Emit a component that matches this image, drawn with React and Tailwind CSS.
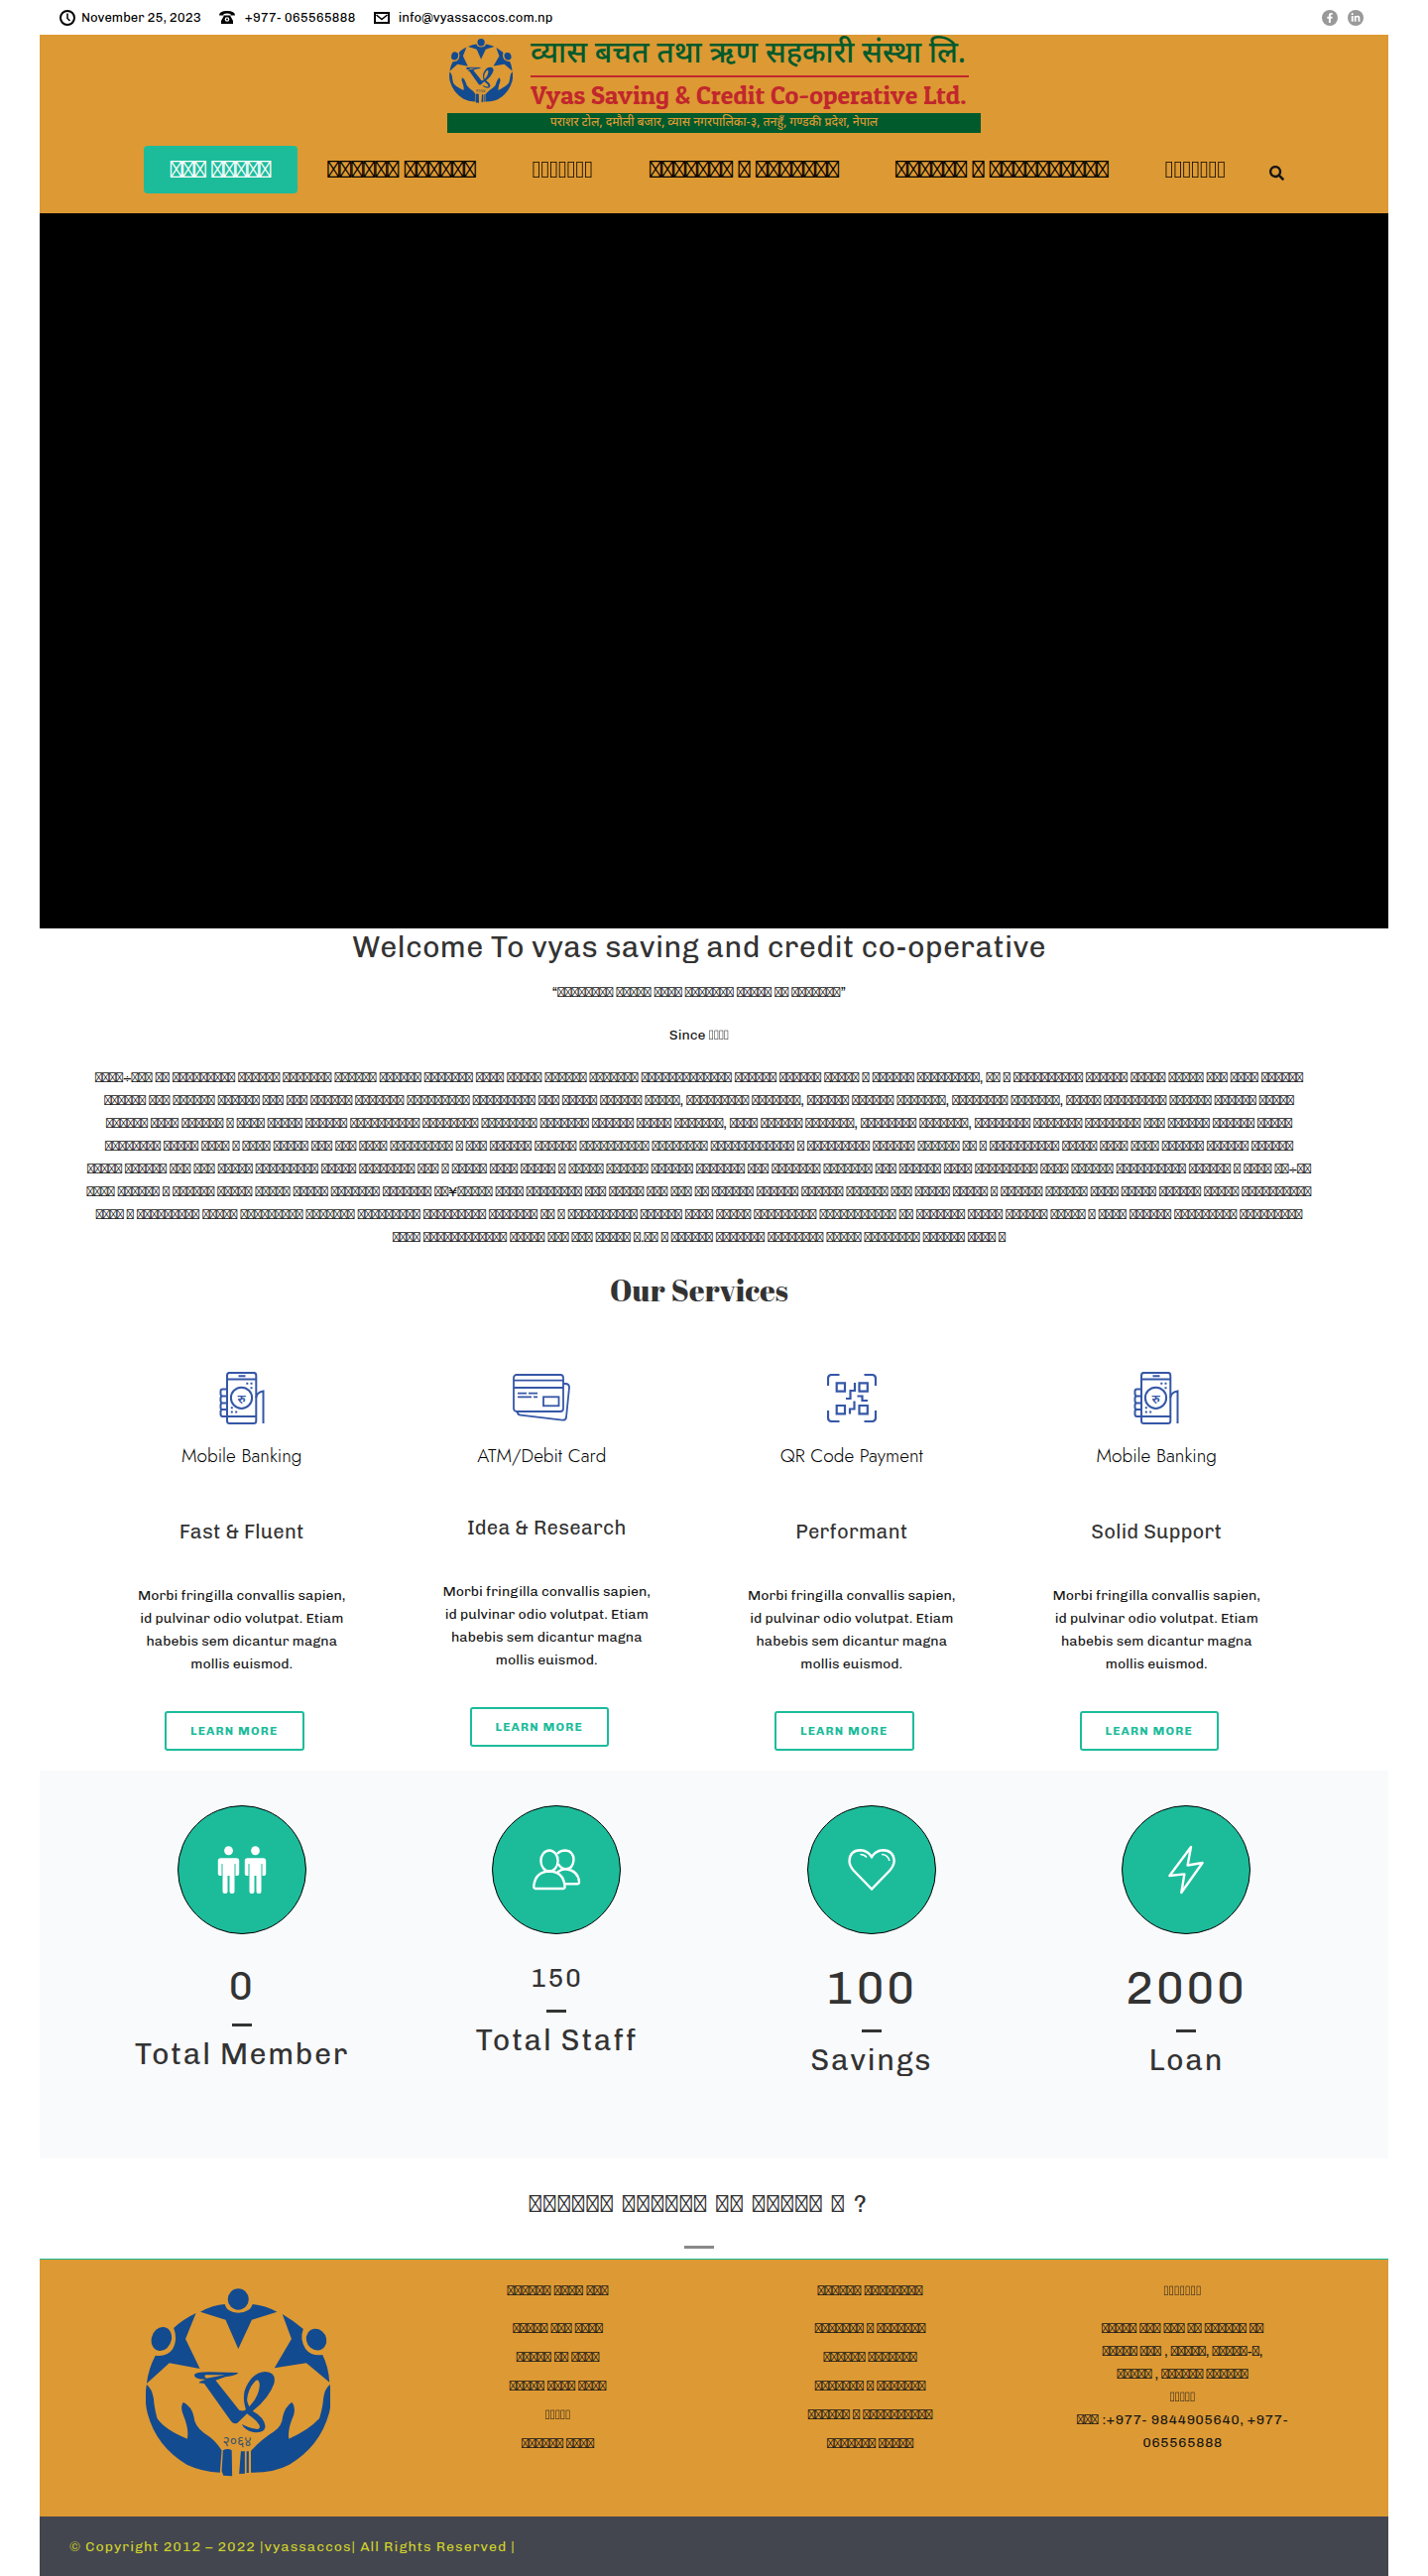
import React from "react";
import { FaSearch, FaFacebookF, FaLinkedinIn } from "react-icons/fa";

const GLYPH = "\uE002";
const boxes = (pattern) => pattern.replace(/#/g, GLYPH);

function Boxes({ children, thin }) {
  return <span className={thin ? "font-['WenQuanYi_Zen_Hei','Roboto',sans-serif]" : ""}>{boxes(children)}</span>;
}

const NAV = [
  { text: "### #####", active: true },
  { text: "###### ######" },
  { text: "#######", thin: true },
  { text: "####### # #######" },
  { text: "###### # ##########" },
  { text: "#######", thin: true },
];

const INTRO = [
  "####÷### ## ######### ###### ####### ###### ###### ####### #### ##### ###### ####### ############# ###### ###### ##### # ###### #########, ## # ########## ###### ##### ##### ### #### ######",
  "###### ### ###### ###### ### ### ###### ####### ######### ######### ### ##### ###### #####, ######### #######, ###### ###### #######, ######## #######, ##### ######### ###### ###### #####",
  "###### #### ###### # #### ##### ###### ########## ######## ######## ####### ###### ##### #######, #### ###### #######, ######## #######, ######## ####### ######## ### ###### ###### #####",
  "######## ##### #### # #### ##### ### ### #### ######### # ### ###### ###### ########## ######## ############ # ######### ###### ###### ## # ########## ##### #### #### ###### ###### ######",
  "##### ###### ### ### ##### ######### ##### ######## ### # ##### #### ##### # ##### ###### ###### ####### ### ####### ####### ### ###### #### ######### #### ###### ########## ###### # #### ##÷##",
  "#### ###### # ###### ##### ##### ##### ####### ####### ##¥##### #### ######## ### ##### ### ### ## ###### ###### ###### ###### ### ##### ##### # ###### ###### #### ##### ###### ##### ##########",
  "#### # ######### ##### ######### ####### ######### ######### ####### ## # ########## ###### #### ##### ######### ########### ## ####### ##### ###### ##### # #### ###### ######### #########",
  "#### ############ ##### ### ### ##### #.## # ###### ####### ######## ##### ######## ###### #### #",
];

function Emblem({ className }) {
  return (
    <svg viewBox="0 0 186 190" className={className} fill="#134b90" role="img" aria-label="Vyas emblem">
      <g transform="scale(0.44 0.3333) translate(-266 -142)">
        <ellipse cx="478" cy="175" rx="24" ry="32" />
        <path d="M391 213Q420 192 447 190Q452 215 478 216Q505 215 511 190Q540 194 567 213L509 237L478 325L449 237Z" />
        <ellipse cx="302" cy="295" rx="23" ry="36" transform="rotate(8 302 295)" />
        <path d="M381 217L357 295L390 385L320 368L268 430Q272 385 288 345Q315 350 328 325Q340 295 330 262Q352 235 381 217Z" />
        <ellipse cx="657" cy="297" rx="23" ry="33" transform="rotate(-8 657 297)" />
        <path d="M579 220L600 295L561 383L634 368L687 426Q685 380 671 343Q645 348 632 325Q618 295 627 265Q605 240 579 220Z" />
        <path d="M268 433Q262 480 270 520Q290 620 360 675Q395 697 436 699L440 632Q425 600 400 580Q378 560 376 530Q372 500 352 486Q344 500 352 525Q366 570 361 597Q310 570 292 535Q285 500 284 475Q280 445 268 433Z" />
        <path d="M688 433Q694 480 686 520Q665 620 595 675Q560 700 507 699L507 634Q530 600 560 575Q578 560 580 530Q585 500 601 486Q610 500 605 525Q590 570 594 597Q640 570 664 535Q672 500 673 475Q676 445 688 433Z" />
        <path d="M443 632Q454 624 463 632L464 710L444 708L440 695ZM484 635H493V702L480 703ZM497 635h5v65h-5z" />
        <path fillRule="evenodd" d="M377 405Q378 395 410 395L478 397Q474 406 448 410L426 420L480 510Q490 516 497 507L503 515L476 549Q468 554 462 545L400 430L388 428L390 424L404 417Q380 418 377 405ZM403 404Q398 408 405 414L447 404Z" />
        <path fillRule="evenodd" d="M499 522Q484 470 496 440Q512 395 540 394Q566 396 560 430Q548 475 511 513Q538 532 540 560Q538 582 512 577Q492 570 486 553Q505 566 522 568Q530 566 526 555Q518 538 499 522ZM503 500Q525 470 527 435Q526 415 518 421Q500 445 498 480Q500 492 503 500Z" />
      </g>
      <text x="92" y="159" textAnchor="middle" fontSize="14" fontFamily="'Noto Sans Devanagari','Noto Sans',sans-serif" fill="#3d5568">२०६४</text>
    </svg>
  );
}

function PhoneArt() {
  return (
    <svg width="46" height="53" viewBox="-0.5 0 46 53" fill="none" stroke="#3557a7" strokeWidth="2">
      <rect x="7.5" y="0.9" width="29.3" height="51" rx="2.5" />
      <path d="M7.5 7.5H36.8M7.5 45H36.8M19 4.3h7" />
      <circle cx="22" cy="26.3" r="10.6" />
      <path d="M7.5 17.5H3Q1 17.5 1 19.5V22Q1 24.5 3 24.5H7.5M3 24.5Q1 24.5 1 26.5V29Q1 31.5 3 31.5H7.5M3 31.5Q1 31.5 1 33.5V36Q1 38 3 38H7.5M3 38Q1 38 1 40V42.5Q1 45 3 45H7.5" />
      <path d="M36.8 26Q37 21 44 19.5V52" />
      <path d="M26.8 11.7h2M31 11.7h2M31 16.3h2M11.3 36.3h2M11.3 40.6h2M15.7 40.6h2" />
      <text x="22" y="31.5" textAnchor="middle" fontSize="13" fontWeight="600" fontFamily="'Noto Sans Devanagari','Noto Sans',sans-serif" fill="#3557a7" stroke="none">रु</text>
    </svg>
  );
}

function CardArt() {
  return (
    <svg width="58" height="48" viewBox="-1 -1 58 48" fill="none" stroke="#3557a7" strokeWidth="1.8">
      <rect x="0" y="0" width="50" height="37" rx="3" />
      <path d="M0 5.7H50M0 13H50M4 18.7h9M15 18.7h9M4 22.3h14M20 22.3h4" />
      <rect x="30" y="22.3" width="15.5" height="9" />
      <path d="M50 9H53Q56.2 9.5 56 13L53 43Q52.5 46 49 45.6L7 40.7Q4 40.5 3.5 37" />
    </svg>
  );
}

function QrArt() {
  return (
    <svg width="50" height="49" viewBox="-1 -1 50 49" fill="none" stroke="#3557a7" strokeWidth="2.2">
      <path d="M0 11V4Q0 0 4 0H11.5M36.5 0H44Q48 0 48 4V11M48 36V43Q48 47 44 47H36.5M11.5 47H4Q0 47 0 43V36" />
      <path d="M8.7 8.3h8.3v8.3h-8.3zM31.5 8.3h8.3v8.3h-8.3zM8.7 31h8.3v8.3h-8.3zM31.5 31h8.3v8.3h-8.3zM27 8V16H22.5V24H18M29.5 21.5H34.5V26H40M26.5 26.5V34.5H22V39.5" />
    </svg>
  );
}

const SERVICES = [
  { art: <PhoneArt />, label: "Mobile Banking", title: "Fast & Fluent" },
  { art: <CardArt />, label: "ATM/Debit Card", title: "Idea & Research", raised: true },
  { art: <QrArt />, label: "QR Code Payment", title: "Performant" },
  { art: <PhoneArt />, label: "Mobile Banking", title: "Solid Support" },
];

const Man = ({ x }) => (
  <g transform={`translate(${x} 0)`}>
    <ellipse cx="0" cy="-19.3" rx="4.4" ry="4.5" />
    <path d="M-8 -11.7H8Q10.7 -11.7 10.7 -9V4Q10.7 6 8.7 6H7V-6H6V22Q6 24 4 24H3Q1 24 1 22V6H-1V22Q-1 24 -3 24H-4Q-6 24 -6 22V-6H-7V6H-8.7Q-10.7 6 -10.7 4V-9Q-10.7 -11.7 -8 -11.7Z" />
  </g>
);

const STATS = [
  {
    value: "0", size: "text-[40px] leading-[52px]", label: "Total Member",
    art: <g fill="#fff"><Man x={-13.5} /><Man x={13.5} /></g>,
  },
  {
    value: "150", size: "text-[26px] leading-[38px]", label: "Total Staff",
    art: (
      <g fill="none" stroke="#fff" strokeWidth="2.4">
        <ellipse cx="-7" cy="-9" rx="8.6" ry="10.5" />
        <path d="M-21 19H7Q9 19 8.5 16Q7 2 -7 1.5Q-21 2 -22.7 16Q-23 19 -21 19Z" />
        <path d="M1 -16Q3.5 -19.5 9.5 -19.5Q17.5 -18.5 17.5 -10Q17 -1 9.5 -0.7Q4.5 -1 2 -6M1 2.5Q5 -0.5 9.5 -0.7Q22 1 23 12Q23.2 14.3 21 14.3H9" />
      </g>
    ),
  },
  {
    value: "100", size: "text-[46px] leading-[58px]", label: "Savings",
    art: (
      <g fill="none" stroke="#fff" strokeWidth="2.4">
        <path d="M0 19.5L-18 1Q-22.5 -4 -22.5 -9Q-22 -19.5 -11.5 -19.8Q-4 -19.5 0 -13Q4 -19.5 11.5 -19.8Q22 -19.5 22.7 -9Q22.5 -4 18 1Z" />
        <path d="M-11.5 -15.5Q-7.5 -15.5 -5 -12.5M10 -15.5Q16 -15.5 18 -9" strokeWidth="1.5" />
      </g>
    ),
  },
  {
    value: "2000", size: "text-[46px] leading-[58px]", label: "Loan",
    art: <path d="M5 -23L1.6 -4.5L16.6 -7L-4.7 23L-1.6 4.4L-16.6 6Z" fill="none" stroke="#fff" strokeWidth="2.4" strokeLinejoin="round" />,
  },
];

const FOOTER_A = ["##### ### ####", "##### ## ####", "##### #### ####", "#####", "###### ####"];
const FOOTER_B = ["####### # #######", "###### #######", "####### # #######", "###### # ##########", "####### #####"];

function TopBar() {
  return (
    <div className="mx-10 flex h-[35px] items-center justify-between pl-5 pr-[25px] text-[13px] text-black">
      <div className="flex items-center gap-[18px]">
        <span className="flex items-center gap-[6px]">
          <svg width="16" height="16" viewBox="0 0 16 16" fill="none" stroke="#000" strokeWidth="2"><circle cx="8" cy="8" r="7" /><path d="M8 3.5V8.5L10.5 11" strokeWidth="1.5" /></svg>
          November 25, 2023
        </span>
        <a href="tel:+977065565888" className="flex items-center gap-[10px]">
          <svg width="16" height="13" viewBox="0 0 16 13"><path d="M0 4.5Q0 0 8 0Q16 0 16 4.5H11.5V3Q8 2 4.5 3V4.5ZM5 4.5H11L14 10V13H2V10Z" /><circle cx="8" cy="8.5" r="2.3" fill="#fff" /><circle cx="8" cy="8.5" r="1" /></svg>
          +977- 065565888
        </a>
        <a href="mailto:info@vyassaccos.com.np" className="flex items-center gap-[9px]">
          <svg width="16" height="12" viewBox="0 0 16 12" fill="none" stroke="#000" strokeWidth="2"><rect x="1" y="1" width="14" height="10" /><path d="M2.5 3L8 7.5L13.5 3" strokeWidth="1.6" /></svg>
          info@vyassaccos.com.np
        </a>
      </div>
      <div className="flex gap-[10px] text-white">
        <a href="#facebook" aria-label="Facebook" className="flex size-4 items-center justify-center rounded-full bg-[#999]"><FaFacebookF size={10} /></a>
        <a href="#linkedin" aria-label="LinkedIn" className="flex size-4 items-center justify-center rounded-full bg-[#999]"><FaLinkedinIn size={10} /></a>
      </div>
    </div>
  );
}

function Header() {
  return (
    <header className="bg-[#dd9933] pb-5">
      <div className="mx-auto w-[538px]">
        <div className="flex h-[79px] gap-[18px] pl-[2px]">
          <Emblem className="mt-1 h-[65px] w-[64px] shrink-0" />
          <div className="w-[446px] whitespace-nowrap">
            <p className="h-[41px] font-['Noto_Sans_Devanagari','Noto_Sans',sans-serif] text-[30px] font-medium leading-[42px] text-[#005a2c]">व्यास बचत तथा ऋण सहकारी संस्था लि.</p>
            <div className="h-[2px] w-[442px] bg-[#c1272d]" />
            <p className="font-['Patua_One','Liberation_Serif',serif] text-[26px] leading-[36px] text-[#c1272d]">Vyas Saving &amp; Credit Co-operative Ltd.</p>
          </div>
        </div>
        <p className="bg-[#005a2c] text-center font-['Noto_Sans_Devanagari','Noto_Sans',sans-serif] text-[12px] font-medium leading-[20px] text-[#dd9933]">
          पराशर टोल, दमौली बजार, व्यास नगरपालिका-३, तनहुँ, गण्डकी प्रदेश, नेपाल
        </p>
      </div>
      <nav className="mt-[13px] flex items-center justify-center gap-[3px]">
        {NAV.map((n, i) => (
          <a key={i} href="#" className={n.active ? "h-12 rounded bg-[#1cbc9b] px-[27px] text-[24px] leading-[48px] text-white" : "h-12 px-[27px] text-[24px] leading-[48px] text-black"}>
            <Boxes thin={n.thin}>{n.text}</Boxes>
          </a>
        ))}
        <button type="button" aria-label="Search" className="ml-[14px] mt-[6px]"><FaSearch size={15} /></button>
      </nav>
    </header>
  );
}

export default function App() {
  return (
    <div className="min-w-[1200px] bg-white font-['Chivo','Liberation_Sans',sans-serif] text-[14px] leading-[23px] text-[#161616]">
      <TopBar />
      <div className="mx-10">
        <Header />
        <div className="h-[721px] bg-black" />

        <main>
          <section className="pl-[50px] pr-20 text-center">
            <h1 className="text-[30px] leading-[38px] tracking-[0.01em] text-[#333]">Welcome To vyas saving and credit co-operative</h1>
            <p className="mt-[15px]">“<Boxes>######## ##### #### ####### ##### ## #######</Boxes>”</p>
            <p className="mt-5">Since <Boxes thin>####</Boxes></p>
            <p className="-mx-[5px] mt-5">
              {INTRO.map((line, i) => <span key={i} className="block"><Boxes>{line}</Boxes></span>)}
            </p>
            <h2 className="mt-[22px] font-['Abril_Fatface','Liberation_Serif',serif] text-[30px] leading-[40px] tracking-[0.01em] text-[#333]">Our Services</h2>
            <div className="mt-[58px] grid grid-cols-4 pb-5">
              {SERVICES.map((s, i) => (
                <article key={i} className="flex flex-col items-center">
                  <div className={s.raised ? "mr-[10px] flex flex-col items-center" : "flex flex-col items-center"}>
                    <div className="flex h-[60px] items-center justify-center">{s.art}</div>
                    <p className="mt-[14px] font-['Jost','Lato',sans-serif] text-[19px] font-light leading-[30px] text-black">{s.label}</p>
                  </div>
                  <h3 className={s.raised ? "mt-[42px] text-[20px] leading-[30px] tracking-[0.01em] text-[#333]" : "mt-[46px] text-[20px] leading-[30px] tracking-[0.01em] text-[#333]"}>{s.title}</h3>
                  <p className="mt-[38px] w-[215px]">Morbi fringilla convallis sapien, id pulvinar odio volutpat. Etiam habebis sem dicantur magna mollis euismod.</p>
                  <button type="button" className="mr-[15px] mt-9 h-10 rounded-[3px] border-2 border-[#1cbc9b] px-6 text-[12px] font-bold tracking-widest text-[#1cbc9b]">LEARN MORE</button>
                </article>
              ))}
            </div>
          </section>

          <section className="grid grid-cols-4 bg-[#f9fafc] px-[45px] pb-[79px] pt-[35px] text-center text-[#333]">
            {STATS.map((s) => (
              <div key={s.label} className="flex flex-col items-center">
                <div className="flex size-[130px] items-center justify-center rounded-full border border-black bg-[#1cbc9b]">
                  <svg width="60" height="60" viewBox="-30 -30 60 60" aria-hidden="true">{s.art}</svg>
                </div>
                <p className={`mt-[26px] tracking-wider ${s.size}`}>{s.value}</p>
                <div className="mt-3 h-[3px] w-5 bg-[#333]" />
                <p className="mt-2 text-[30px] leading-[40px] tracking-wider">{s.label}</p>
              </div>
            ))}
          </section>

          <section className="flex flex-col items-center pb-[10px] pl-[50px] pr-20 pt-[26px]">
            <h2 className="text-[24px] leading-[40px] tracking-widest text-[#333]"><Boxes>###### ###### ## ##### # ?</Boxes></h2>
            <div className="mt-[22px] h-[3px] w-[30px] bg-[#888]" />
          </section>
        </main>

        <footer className="text-center">
          <div className="grid grid-cols-4 border-t border-[#1cbc9b] bg-[#dd9933] px-[50px] pb-10 pt-5">
            <div><Emblem className="ml-[57px] mt-[9px] h-[190px] w-[186px]" /></div>
            <div>
              <h4 className="font-bold tracking-wide"><Boxes>###### #### ###</Boxes></h4>
              <ul className="mt-3 leading-[29px]">
                {FOOTER_A.map((t, i) => <li key={i} className="h-[29px]"><a href="#"><Boxes thin={!t.includes(" ")}>{t}</Boxes></a></li>)}
              </ul>
            </div>
            <div>
              <h4 className="font-bold tracking-wide"><Boxes>###### ########</Boxes></h4>
              <ul className="mt-3 leading-[29px]">
                {FOOTER_B.map((t, i) => <li key={i} className="h-[29px]"><a href="#"><Boxes>{t}</Boxes></a></li>)}
              </ul>
            </div>
            <div>
              <h4 className="h-[23px] tracking-wide"><Boxes thin>#######</Boxes></h4>
              <address className="mt-[15px] not-italic">
                <Boxes>##### ### ### ## ###### ##</Boxes><br />
                <Boxes>##### ### , #####, #####-#,</Boxes><br />
                <Boxes>##### , ###### ######</Boxes><br />
                <Boxes thin>#####</Boxes><br />
                <span className="tracking-wide"><Boxes>###</Boxes> :+977- 9844905640, +977-<br />065565888</span>
              </address>
            </div>
          </div>
          <div className="bg-[#44464f] px-[30px] py-[19px] text-left text-[14px] tracking-[1px] text-[#cfd12b]">
            © Copyright 2012 – 2022 |vyassaccos| All Rights Reserved |
          </div>
        </footer>
      </div>
    </div>
  );
}
